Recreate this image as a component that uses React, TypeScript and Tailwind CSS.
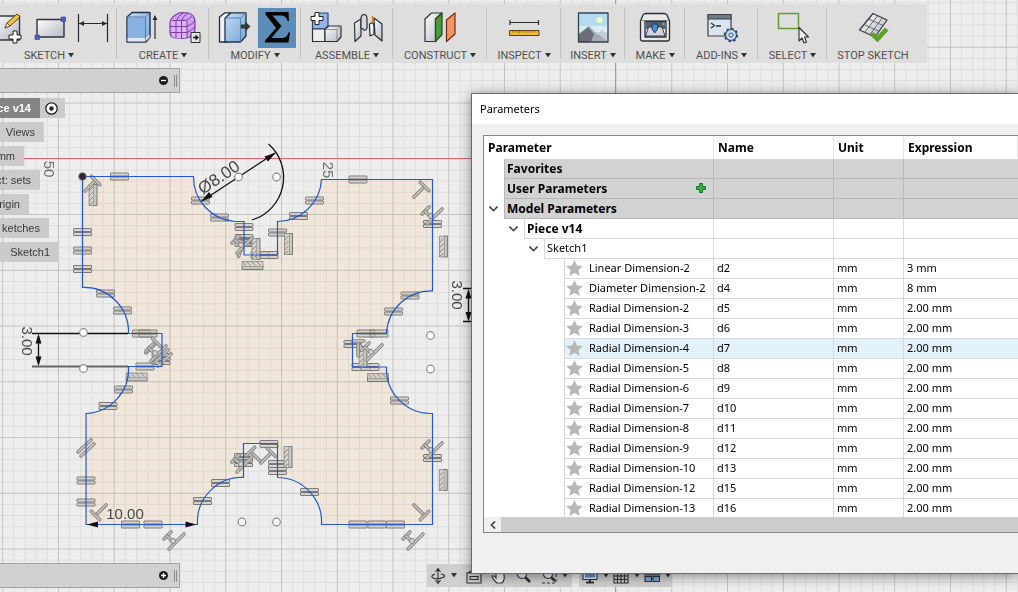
import type { ReactNode } from "react";
import { clsx } from "clsx";

type Point = [number, number];

function Icon({ children }: { children: ReactNode }) {
  return (
    <svg viewBox="0 0 32 32" className="w-8 h-8 overflow-visible" fill="none" strokeLinejoin="round">
      {children}
    </svg>
  );
}

function Caret() {
  return (
    <svg viewBox="0 0 6 5" className="w-[6px] h-[5px] flex-shrink-0">
      <path d="M0 0h6L3 4.500z" fill="#333" />
    </svg>
  );
}

const Defs = () => (
  <defs>
    <linearGradient id="steel" x1="0" y1="0" x2="1" y2="1">
      <stop offset="0" stopColor="#fdfdfd" />
      <stop offset="1" stopColor="#b4b9c4" />
    </linearGradient>
    <linearGradient id="sky" x1="0" y1="0" x2="1" y2="1">
      <stop offset="0" stopColor="#c5dcf3" />
      <stop offset="1" stopColor="#76a6d8" />
    </linearGradient>
    <pattern id="minor" width="11.15" height="11.15" x="2.250" y="2.200" patternUnits="userSpaceOnUse">
      <path d="M.5 0V11.150M0 .5H11.150" stroke="#a9a9a9" strokeOpacity=".24" strokeWidth="1" />
    </pattern>
    <pattern id="major" width="55.75" height="55.75" x="2.250" y="46.800" patternUnits="userSpaceOnUse">
      <path d="M.5 0V55.750M0 .5H55.750" stroke="#8c8c8c" strokeOpacity=".3" strokeWidth="1" />
    </pattern>
  </defs>
);

/* Toolbar icons */

const CreateSketchIcon = () => (
  <Icon>
    <path d="M2 4H29.500V28H2z" fill="url(#steel)" stroke="#33373f" strokeWidth="1.400" />
    <path d="M15 16l2-5L27 2l3 3-10 9z" fill="#f5c33b" stroke="#5a4314" />
    <path d="M15 16l2-5 3 3z" fill="#f7e3bd" stroke="#5a4314" strokeWidth=".7" />
    <path d="M23 19h4v4h4v4h-4v4h-4v-4h-4v-4h4z" fill="#fff" stroke="#222" />
  </Icon>
);

const RectangleIcon = () => (
  <Icon>
    <path d="M4 7.500H31V25H4z" fill="url(#steel)" stroke="#2f3338" strokeWidth="1.400" />
    <path d="M28 5h4.500v4.500H28zM2 23h4.500v4.500H2z" fill="#4661c4" stroke="#2f479f" strokeWidth=".6" />
  </Icon>
);

const DimensionIcon = () => (
  <Icon>
    <path d="M2.500 2V30M31.500 2V30M3 11.500H31" stroke="#25282c" strokeWidth="1.200" />
    <path d="M3 11.500l5-2.500v5zM31 11.500l-5-2.500v5z" fill="#25282c" />
  </Icon>
);

const ExtrudeIcon = () => (
  <Icon>
    <path d="M1 5L6 .500H24V25l-4 5H1z" fill="url(#sky)" stroke="#20304a" strokeWidth="1.400" />
    <path d="M1.700 5.500H19.500V25.500H1.700z" fill="#8ab2e0" />
    <path d="M1.500 26H20l3.500-3.500v3L19.500 29.500H1.500z" fill="#e4e8ee" />
    <path d="M1 5H19.500L24 .700M19.500 5V29" stroke="#4c6c98" strokeWidth=".8" />
    <path d="M29 5V27" stroke="#26292d" strokeWidth="1.200" />
    <path d="M29 3l-2.500 5h5z" fill="#26292d" />
  </Icon>
);

const FormIcon = () => (
  <Icon>
    <path d="M1 11Q1 6 8 2 11 0 19 1 25 2 26 9V17Q26 22 21 25 17 27 8 26 1 26 1 20z" fill="#cfa0f2" stroke="#7f3ba6" strokeWidth="1.200" />
    <path d="M2 9Q5 8 16 8.500L18 10V25.500Q10 27 3 25z" fill="#dbb4f7" />
    <path d="M1 14.500H18Q23 12 26 9M1 20.500H18Q23 18 26 15M3 8.500H17Q22 6 23 3.500M7 26V9Q9 4 14 1M12.500 26V9Q14 4 19 1M18 26V9" stroke="#7f3ba6" />
    <path d="M22 20.500H31V30.500H22z" fill="#e6e6e6" stroke="#2c2c2c" />
    <path d="M24 25.500h3" stroke="#111" strokeWidth="1.500" />
    <path d="M26.500 22.500l3.500 3-3.500 3z" fill="#111" />
  </Icon>
);

const PressPullIcon = () => (
  <Icon>
    <path d="M1.500 5L7 .800H13L9 5V30H1.500z" fill="#f0f3f7" stroke="#20304a" strokeWidth="1.300" />
    <path d="M7 6L13 .800H28V24l-5.500 6H7z" fill="url(#sky)" stroke="#20304a" strokeWidth="1.300" />
    <path d="M7 6H22.500L28 .800M22.500 6V30" stroke="#557bab" strokeWidth=".9" />
    <path d="M23 12.500h4V9.500l5.500 5-5.500 5v-3h-4z" fill="#33372f" />
  </Icon>
);

const SigmaIcon = () => (
  <Icon>
    <path
      d="M4.500 0H27.500L28 9H26.500Q25.500 3.500 20 3.500H11.500L20.500 14 10.500 26H21Q26 26 27.500 20.500H29L27.500 30.500H4V28.500L15 16 4.500 2.500z"
      fill="#050505"
    />
  </Icon>
);

const NewComponentIcon = () => (
  <Icon>
    <path d="M2.500 6L7 1H18V14L15 17H2.500z" fill="#91b5e6" stroke="#2d4777" strokeWidth="1.200" />
    <path d="M2.500 17H15V29.500H2.500z" fill="#eceef1" stroke="#2c3036" strokeWidth="1.200" />
    <path d="M15 17l4-3H31V25l-4 4.500H15z" fill="url(#steel)" stroke="#2c3036" strokeWidth="1.200" />
    <path d="M15 17.500H27L31 14M27 17.500V29" stroke="#777d86" strokeWidth=".8" />
    <path d="M5 .500H9V4.500H13V8.500H9V12.500H5V8.500H1V4.500H5z" fill="#fff" stroke="#222" />
  </Icon>
);

const JointIcon = () => (
  <Icon>
    <path d="M1.500 11L8 7V24l-6 5.500z" fill="url(#steel)" stroke="#2c3036" strokeWidth="1.200" />
    <path d="M8 7Q8 2.500 11.500 2.500 14 3 14 7V16Q12 20 10 17L8 16z" fill="#d6dae0" stroke="#2c3036" strokeWidth="1.200" />
    <path d="M19.500 4V15" stroke="#f07d22" strokeWidth="1.500" />
    <path d="M21 6L29 12V29L22 23z" fill="url(#steel)" stroke="#2c3036" strokeWidth="1.200" />
    <path d="M16.500 14Q16 11 18.500 11 21 11 21 14V22L17 24z" fill="#eef0f3" stroke="#2c3036" strokeWidth="1.200" />
  </Icon>
);

const PlaneIcon = () => (
  <Icon>
    <path d="M1 7L7.500 1H18L11.500 7V29.500H1z" fill="url(#steel)" stroke="#2c3036" strokeWidth="1.200" />
    <path d="M11.500 7L18 1V22.500l-6.500 7z" fill="#4b9a3a" stroke="#1f4c17" strokeWidth="1.200" />
    <path d="M22.500 8L31 1V22l-8.500 7.500z" fill="#f39461" stroke="#6f2d12" strokeWidth="1.200" />
  </Icon>
);

const MeasureIcon = () => (
  <Icon>
    <path d="M2 8V13M30.500 8V13M2 10.500H30.500" stroke="#2b2e33" strokeWidth="1.200" />
    <path d="M1.500 18.500H31V23.500H1.500z" fill="#f2b92e" stroke="#61430d" />
    <path d="M5 19v1.500M8 19v1.500M11 19v2M14 19v1.500M17 19v1.500M20 19v2M23 19v1.500M26 19v1.500" stroke="#61430d" strokeWidth=".8" />
  </Icon>
);

const ImageIcon = () => (
  <Icon>
    <path d="M1.500 1H31V30H1.500z" fill="#b4dcef" />
    <path d="M1.500 14H31V20H1.500z" fill="#dcebf0" />
    <circle cx="22.500" cy="8" r="3" fill="#fff6bd" />
    <path d="M1.500 22L12 14 21 23 25 18 31 24V30H1.500z" fill="#a5aab3" />
    <path d="M1.500 23L11 15 17 22 14 30H1.500z" fill="#6a6f7a" />
    <path d="M21 22L25 18 31 24V30z" fill="#c7cbd2" />
    <path d="M1.500 1H31V30H1.500z" stroke="#354357" strokeWidth="1.300" />
  </Icon>
);

const PrinterIcon = () => (
  <Icon>
    <path d="M1.500 9L4 3Q5 1.500 7 1.500H25Q27 1.500 28 3L30.500 9V27Q30.500 29 28 29H4Q1.500 29 1.500 27z" fill="#e6e8ec" stroke="#2c3036" strokeWidth="1.300" />
    <path d="M2.500 8.500H29.500" stroke="#8b9099" />
    <path d="M6 9.500H27V25H6z" fill="#f4f5f7" stroke="#2c3036" strokeWidth="1.300" />
    <path d="M7 10H26V17H7z" fill="#5a6069" />
    <path d="M6.500 24L9.500 15H23L26 24z" fill="#d0d6df" stroke="#2c3036" strokeWidth=".9" />
    <path d="M13 12H18.500V17L15.700 21 13 17z" fill="#4d8cd6" stroke="#1d3d6b" />
    <circle cx="24.500" cy="12" r="1" fill="#7ad35f" />
  </Icon>
);

const ScriptIcon = () => (
  <Icon>
    <path d="M2 2.500H25V24H2z" fill="#dce4ee" stroke="#3c4047" strokeWidth="1.200" />
    <path d="M2 2.500H25V7H2z" fill="#737a86" stroke="#3c4047" />
    <path d="M5 11l3.500 2.500L5 16M10 14h5" stroke="#2c2f35" strokeWidth="1.300" />
    <circle cx="25" cy="23" r="5.500" fill="#c7daf2" stroke="#29466f" strokeWidth="1.200" />
    <circle cx="25" cy="23" r="6.500" stroke="#29466f" strokeWidth="1.500" strokeDasharray="2.500 2.500" />
    <circle cx="25" cy="23" r="2" fill="#f2f6fc" stroke="#29466f" />
  </Icon>
);

const SelectIcon = () => (
  <Icon>
    <path d="M1.500 1.500H21.500V16.500H1.500z" stroke="#659c2e" strokeWidth="1.500" />
    <path d="M22 15.500V29l3-3 2 5 2.500-1L27.500 25H31.500z" fill="#e9edf3" stroke="#2c3036" strokeWidth="1.100" />
  </Icon>
);

const StopSketchIcon = () => (
  <Icon>
    <path d="M16 1.500L30 8 18 25 2.500 18z" fill="url(#steel)" stroke="#383c44" strokeWidth="1.300" />
    <path d="M20.700 3.700L7.700 20.300M25.400 5.800L12.900 22.700M11.500 7L26 13.500M7 12.500L22 19.300" stroke="#555a63" strokeWidth=".9" />
    <path d="M13.500 23l3-2.500 3.500 4L28 16l3 2.500L20.500 30z" fill="#5da321" stroke="#4a8a16" strokeWidth=".6" />
  </Icon>
);

const groups = [
  { label: "SKETCH", width: "w-[136px] -ml-[19px]", icons: [CreateSketchIcon, RectangleIcon, DimensionIcon] },
  { label: "CREATE", width: "w-[92px]", icons: [ExtrudeIcon, FormIcon] },
  { label: "MODIFY", width: "w-[92px]", icons: [PressPullIcon, SigmaIcon] },
  { label: "ASSEMBLE", width: "w-[92px]", icons: [NewComponentIcon, JointIcon] },
  { label: "CONSTRUCT", width: "w-[94px]", icons: [PlaneIcon] },
  { label: "INSPECT", width: "w-[74px]", icons: [MeasureIcon] },
  { label: "INSERT", width: "w-[64px]", icons: [ImageIcon] },
  { label: "MAKE", width: "w-[60px]", icons: [PrinterIcon] },
  { label: "ADD-INS", width: "w-[73px]", icons: [ScriptIcon] },
  { label: "SELECT", width: "w-[69px]", icons: [SelectIcon] },
  { label: "STOP SKETCH", width: "w-[100px] pr-2", icons: [StopSketchIcon] },
];

function Toolbar() {
  return (
    <header className="absolute top-1 left-0 flex max-w-full overflow-hidden bg-[#dedede] text-[11px] leading-[15px] text-[#505050]">
      {groups.map((group, i) => (
        <div key={group.label} className={clsx("relative flex flex-col items-center flex-shrink-0 pt-1", group.width)}>
          <div className="flex gap-[5px]">
            {group.icons.map((GroupIcon, n) => (
              <button
                key={n}
                aria-label={`${group.label} ${n + 1}`}
                className={clsx("flex items-center justify-center w-[38px] h-10", GroupIcon === SigmaIcon && "bg-[#5b8db8]")}
              >
                <GroupIcon />
              </button>
            ))}
          </div>
          <button className="flex items-center gap-[3px] whitespace-nowrap">
            {group.label}
            {i < groups.length - 1 && <Caret />}
          </button>
          {i < groups.length - 1 && <span className="absolute right-0 top-1 bottom-1 w-px bg-[#c2c2c2]" />}
        </div>
      ))}
    </header>
  );
}

/* Browser tree */

function PanelBar({ open, className }: { open: boolean; className: string }) {
  return (
    <div className={clsx("absolute left-0 flex items-center justify-end gap-[6px] w-[180px] h-[25px] pr-[2px] bg-[#d1d1d1] border border-l-0 border-[#a3a3a3]", className)}>
      <button aria-label={open ? "Collapse" : "Expand"}>
        <svg viewBox="0 0 9 9" className="w-[9px] h-[9px]">
          <circle cx="4.500" cy="4.500" r="4.500" fill="#1c1c1c" />
          <path d={open ? "M2 4.500H7" : "M2 4.500H7M4.500 2V7"} stroke="#fff" strokeWidth="1.300" />
        </svg>
      </button>
      <span className="w-[3px] h-3 border-r border-l border-[#8a8a8a]" />
    </div>
  );
}

const treeItems = [
  { label: "Views", width: "w-[44px]" },
  { label: "mm", width: "w-[24px]" },
  { label: "ct: sets", width: "w-[40px]" },
  { label: "rigin", width: "w-[29px]" },
  { label: "ketches", width: "w-[49px]" },
  { label: "Sketch1", width: "w-[59px]" },
];

function BrowserTree() {
  return (
    <nav className="absolute left-0 top-[98px] flex flex-col items-start gap-1 font-['Liberation_Sans',sans-serif] text-[11px] leading-5 text-[#3a3a3a]">
      <div className="flex w-[65px] h-5 bg-[#cbcbcb]">
        <button className="flex justify-end w-10 pr-[9px] bg-[#848484] font-bold text-white whitespace-nowrap">ce v14</button>
        <button aria-label="Activate component" className="flex items-center justify-center w-[22px]">
          <svg viewBox="0 0 13 13" className="w-[13px] h-[13px]">
            <circle cx="6.500" cy="6.500" r="5.700" fill="#fff" stroke="#222" strokeWidth="1.300" />
            <circle cx="6.500" cy="6.500" r="2.200" fill="#222" />
          </svg>
        </button>
      </div>
      {treeItems.map((item) => (
        <button key={item.label} className={clsx("flex justify-end h-5 pr-[9px] bg-[#cbcbcb] whitespace-nowrap", item.width)}>
          {item.label}
        </button>
      ))}
    </nav>
  );
}

/* Sketch canvas */

const profile =
  "M82.500 176.500H193.500A44.500 44.500 0 0 0 235 221.500H244V255H277.500V221.500A44.500 44.500 0 0 0 321.500 179.500H432.500V291A44.500 44.500 0 0 0 386.500 333.500H352.500V367H386.500A44.500 44.500 0 0 0 430 413.500H432.500V524.500H321.500A44.500 44.500 0 0 0 277.500 477.500V443.500H243.500V477.500A44.500 44.500 0 0 0 197.500 524.500H86V413.500A44.500 44.500 0 0 0 128.500 366.500H162V333.500H128.500A44.500 44.500 0 0 0 82.500 287.500z";

const equals: Point[] = [
  [119.5, 176.5], [358, 179.5], [82.5, 232], [82.5, 250.5], [82.5, 269],
  [200.5, 200.5], [219.5, 217.5], [244, 227], [244, 238], [244, 243], [260, 255], [269, 255],
  [314.5, 200.5], [298.5, 216], [277.5, 232.5],
  [432.5, 224], [410, 295.5], [393.5, 311.5], [366, 333.5], [379, 333.5], [353, 344], [361, 367], [370, 367],
  [105.5, 293.5], [122.5, 310.5], [141.5, 333.5], [148, 333.5], [145, 366.5], [123.5, 389.5], [108, 406], [161, 357], [161, 361],
  [86, 480.5], [86, 502.5], [130.5, 524.5], [153, 524.5], [202.5, 501], [220.5, 483],
  [243.5, 457], [243.5, 463], [269, 444], [277.5, 464], [277.5, 471], [309.5, 492],
  [399.5, 400.5], [432.5, 458], [358, 524.5], [377, 524.5], [395.5, 524.5],
];

// x, y, rotation
const hatched: [number, number, number][] = [
  [93, 195, 0], [256, 249, 0], [288.5, 244, 0], [252.5, 265.5, 90],
  [443.5, 246.5, 0], [363, 357, 0], [136.7, 377, 90], [288, 457, 0], [378, 377.5, 90], [443.3, 480, 0],
];

const perpendicular: [number, number, number][] = [
  [92, 184, 45], [421, 190, 45], [99, 512, 225], [421, 512, 135],
  [153, 346, 45], [242, 247, 20], [254, 455, 315], [268, 456, 45], [358, 346, 0],
];

const parallel: Point[] = [[86, 448], [163, 358]];

const tangents: Point[] = [[174, 540], [413, 540], [432, 215], [432, 449], [242, 463], [242, 244], [156, 352], [372, 351]];

const handles: Point[] = [
  [238.5, 177], [276.5, 177], [83.5, 332.5], [83.5, 368.5],
  [430.5, 335.5], [430.5, 369], [242, 522], [276.5, 522],
];

function Bar({ d }: { d: string }) {
  return (
    <>
      <path d={d} stroke="#777" strokeWidth="3.600" strokeLinecap="round" />
      <path d={d} stroke="#bdbab5" strokeWidth="1.800" strokeLinecap="round" />
    </>
  );
}

function Constraints() {
  return (
    <g fill="none" opacity=".9">
      {equals.map(([x, y], i) => (
        <g key={i} transform={`translate(${x} ${y})`} fill="#c4c1bd" fillOpacity=".6" stroke="#6e6e6e">
          <rect x="-9" y="-3.500" width="18" height="3" rx=".5" />
          <rect x="-9" y=".5" width="18" height="3" rx=".5" />
        </g>
      ))}
      {hatched.map(([x, y, r], i) => (
        <g key={i} transform={`translate(${x} ${y}) rotate(${r})`} stroke="#6e6e6e">
          <path d="M.5-10.500H4V10.500H.5z" fill="#c4c1bd" />
          <path d="M.5-10.500H-4V10.500H.5" fill="#d2cfca" strokeOpacity=".7" />
          <path d="M-4-4l4-4M-4 1l4-4M-4 6l4-4M-4 10l4-3" strokeWidth=".8" />
        </g>
      ))}
      {perpendicular.map(([x, y, r], i) => (
        <g key={i} transform={`translate(${x} ${y}) rotate(${r})`}>
          <Bar d="M0 10V-4" />
          <Bar d="M-6-5H6" />
        </g>
      ))}
      {parallel.map(([x, y], i) => (
        <g key={i} transform={`translate(${x} ${y})`}>
          <Bar d="M-8 4L5-8" />
          <Bar d="M-5 8L8-4" />
        </g>
      ))}
      {tangents.map(([x, y], i) => (
        <g key={i} transform={`translate(${x} ${y})`}>
          <Bar d="M-10-1L-3-8" />
          <Bar d="M-7-4L-2 1" />
          <Bar d="M-5 9L10-6" />
          <circle cx="-1" cy="1" r="2.500" fill="#d6d3ce" stroke="#777" />
        </g>
      ))}
    </g>
  );
}

function Dimensions() {
  return (
    <g>
      <g stroke="#111" strokeWidth="1.300" fill="none">
        <path d="M202 201L275 153" />
        <path d="M268.500 144A44.500 44.500 0 0 1 252 220" />
        <path d="M32 333.500H128M38.500 336V364M468.500 291V320M463 288.500H471M463 321.500H471" />
        <path d="M32 366.500H128" stroke="#666" strokeWidth="2" />
      </g>
      <path
        d="M276 152.500l-11.500 4 3.500 5zM201 201.500l8-9.500 3.500 5zM38.500 334l-3 9.500h6zM38.500 366l-3-9.500h6zM468.500 289l-3 9.500h6zM468.500 321.500l-3-9.500h6zM87 524.500l11-3v6zM196.500 524.500l-11-3v6z"
        fill="#111"
      />
      <g className="font-['Liberation_Sans',sans-serif]" fontSize="15" textAnchor="middle" fill="#484848">
        <text fontSize="17" transform="translate(222 182) rotate(-34)">Ø8.00</text>
        <text transform="translate(44 169) rotate(90)" fill="#707070">50</text>
        <text transform="translate(323 170) rotate(90)" fill="#707070">25</text>
        <text transform="translate(22 341) rotate(90)">3.00</text>
        <text transform="translate(452 295) rotate(90)">3.00</text>
        <text x="125" y="519">10.00</text>
      </g>
    </g>
  );
}

function Canvas() {
  return (
    <svg className="absolute inset-0 w-full h-full">
      <Defs />
      <rect width="100%" height="100%" fill="#ededed" />
      <path d={profile} fill="#f0e6da" />
      <rect width="100%" height="100%" fill="url(#minor)" />
      <rect width="100%" height="100%" fill="url(#major)" />
      <path d="M0 158.500H4000" stroke="#d96a6a" />
      <path d="M615.500 0V2000" stroke="#63c873" />
      <Constraints />
      <path d={profile} fill="none" stroke="#2358cf" strokeWidth="1.200" />
      <Dimensions />
      {handles.map(([x, y], i) => (
        <circle key={i} cx={x} cy={y} r="3.800" fill="#fff" stroke="#8a8a8a" strokeWidth="1.200" />
      ))}
      <circle cx="82.500" cy="176.500" r="3.800" fill="#2b2b2b" stroke="#777" strokeWidth=".8" />
    </svg>
  );
}

/* Navigation bar */

const navIcons = [
  { label: "Orbit", caret: true, art: <path d="M8 1V15M5.500 4L8 .500 10.500 4M5.500 12L8 15.500 10.500 12M5 6Q0 8 3 10 8 12 14 9 16 7 11 6" /> },
  { label: "Look at", caret: false, art: <path d="M1 5H15V15H1zM4 8.500H12V11.500H4zM2 5L8 1V5" /> },
  { label: "Pan", caret: false, art: <path d="M5 14Q1 10 1 8 3 7 5 10V3Q7 2 7 4V2Q9 1 9 3 11 2 11 5 13 4 13 7 14 12 11 15H6z" fill="#f5f5f5" /> },
  { label: "Zoom", caret: false, art: <><circle cx="6" cy="6" r="4.500" fill="#e8eef5" /><path d="M9 9L14 14" strokeWidth="2.500" /></> },
  { label: "Fit", caret: true, art: <><circle cx="7" cy="6" r="4.500" fill="#e8eef5" /><path d="M10 9L14 13" strokeWidth="2.500" /><path d="M1 15H15V1" strokeDasharray="3 2" /></> },
];

const displayIcons = [
  { label: "Display settings", art: <><path d="M1 2H15V11.500H1z" fill="#e8eef5" /><path d="M3 4H13V9.500H3z" fill="#5f92cf" stroke="none" /><path d="M4 14.500H12M8 12V14.500" strokeWidth="2" /></> },
  { label: "Grid and snaps", art: <path d="M1 1H15V15H1zM4.500 1V15M8 1V15M11.500 1V15M1 4.500H15M1 8H15M1 11.500H15" /> },
  { label: "Viewports", art: <path d="M1 2H7.500V7H1zM9 2H15.500V7H9zM1 8.500H7.500V13.500H1zM9 8.500H15.500V13.500H9z" fill="#7ea9dc" /> },
];

function NavButton({ label, art, caret }: { label: string; art: ReactNode; caret: boolean }) {
  return (
    <button aria-label={label} className="flex items-center gap-[5px]">
      <svg viewBox="0 0 16 16" className="w-4 h-4" fill="none" stroke="#2f3338" strokeWidth="1.100">
        {art}
      </svg>
      {caret && <Caret />}
    </button>
  );
}

function NavigationBar() {
  return (
    <div className="absolute left-[427px] top-[564px] flex gap-[7px]">
      <div className="flex items-center gap-[9px] w-[145px] h-[23px] pl-[3px] bg-[#cfcfcf]">
        {navIcons.map((item) => <NavButton key={item.label} {...item} />)}
      </div>
      <div className="flex items-center gap-1 w-[93px] h-[23px] pl-[3px] bg-[#cfcfcf]">
        {displayIcons.map((item) => <NavButton key={item.label} {...item} caret />)}
      </div>
    </div>
  );
}

/* Parameters dialog */

const sections = [
  { title: "Favorites", kind: "section" },
  { title: "User Parameters", kind: "section", addable: true },
  { title: "Model Parameters", kind: "section", open: true },
  { title: "Piece v14", kind: "component", open: true },
  { title: "Sketch1", kind: "sketch", open: true },
];

const parameters = [
  ["Linear Dimension-2", "d2", "3 mm"],
  ["Diameter Dimension-2", "d4", "8 mm"],
  ["Radial Dimension-2", "d5", "2.00 mm"],
  ["Radial Dimension-3", "d6", "2.00 mm"],
  ["Radial Dimension-4", "d7", "2.00 mm"],
  ["Radial Dimension-5", "d8", "2.00 mm"],
  ["Radial Dimension-6", "d9", "2.00 mm"],
  ["Radial Dimension-7", "d10", "2.00 mm"],
  ["Radial Dimension-8", "d11", "2.00 mm"],
  ["Radial Dimension-9", "d12", "2.00 mm"],
  ["Radial Dimension-10", "d13", "2.00 mm"],
  ["Radial Dimension-12", "d15", "2.00 mm"],
  ["Radial Dimension-13", "d16", "2.00 mm"],
];

function Chevron() {
  return (
    <button aria-label="Collapse" className="flex items-center justify-center w-5 h-full pr-[2px]">
      <svg viewBox="0 0 9 6" className="w-[9px] h-[6px]" fill="none" stroke="#444" strokeWidth="1.600">
        <path d="M.5 .500L4.500 4.700 8.500 .500" />
      </svg>
    </button>
  );
}

function Star() {
  return (
    <svg viewBox="0 0 17 18" className="w-[17px] h-[18px] flex-shrink-0" fill="#b8b8b8">
      <path d="M8.500 0L11 5.500 17 6 12.500 10 13.800 16 8.500 13 3.200 16 4.500 10 0 6 6 5.500z" />
    </svg>
  );
}

function ParametersTable() {
  return (
    <table className="w-full table-fixed border-separate border-spacing-0 text-black">
      <colgroup>
        <col className="w-[230px]" />
        <col className="w-[120px]" />
        <col className="w-[70px]" />
        <col />
      </colgroup>
      <thead>
        <tr className="h-[23px] text-left text-[12px] leading-[22px] font-bold">
          {["Parameter", "Name", "Unit", "Expression"].map((title) => (
            <th key={title} className="p-0 pl-1 border-r border-[#e2e2e2]">{title}</th>
          ))}
        </tr>
      </thead>
      <tbody>
        {sections.map((row) => {
          const grey = row.kind === "section";
          const line = grey ? "border-[#b8b8b8] bg-[#d2d2d2]" : "border-[#d9d9d9]";
          return (
            <tr key={row.title} className={clsx("h-5", row.kind === "sketch" ? "text-[11px]" : "text-[12px] font-bold")}>
              <td className="p-0">
                <div className={clsx("flex h-5", row.kind === "component" && "pl-5", row.kind === "sketch" && "pl-10")}>
                  {row.open ? <Chevron /> : <span className="w-5" />}
                  <div className={clsx("flex flex-1 items-center justify-between pl-[2px] pr-[7px] border-l border-b border-r", line)}>
                    {row.title}
                    {row.addable && (
                      <button aria-label="Add user parameter" className="pb-[2px]">
                        <svg viewBox="0 0 10 10" className="w-[10px] h-[10px]">
                          <path d="M3.500 .500H6.500V3.500H9.500V6.500H6.500V9.500H3.500V6.500H.5V3.500H3.500z" fill="#35b04a" stroke="#167528" />
                        </svg>
                      </button>
                    )}
                  </div>
                </div>
              </td>
              <td className={clsx("p-0 border-b border-r", line)} />
              <td className={clsx("p-0 border-b border-r", line)} />
              <td className={clsx("p-0 border-b", line)} />
            </tr>
          );
        })}
        {parameters.map(([title, name, expression]) => {
          const cell = clsx("border-[#d9d9d9]", name === "d7" && "bg-[#e3f1fb]");
          return (
            <tr key={name} className="h-5 text-[11px]">
              <td className="p-0 pl-20">
                <div className={clsx("flex items-center gap-[6px] h-5 pl-px border-l border-b border-r whitespace-nowrap", cell)}>
                  <Star />
                  {title}
                </div>
              </td>
              <td className={clsx("p-0 pl-[3px] border-b border-r", cell)}>{name}</td>
              <td className={clsx("p-0 pl-[3px] border-b border-r", cell)}>mm</td>
              <td className={clsx("p-0 pl-[3px] border-b", cell)}>{expression}</td>
            </tr>
          );
        })}
      </tbody>
    </table>
  );
}

function ParametersDialog() {
  return (
    <section
      aria-label="Parameters"
      className="absolute left-[471px] right-0 top-[93px] pb-10 bg-[#f0f0f0] border border-r-0 border-[#6b6b6b] shadow-[0_2px_12px_rgba(0,0,0,0.45)] font-['Noto_Sans',sans-serif]"
    >
      <h1 className="h-[30px] pl-2 bg-white text-[11px] leading-[30px] text-black">Parameters</h1>
      <div className="mt-[11px] ml-[11px] bg-white border border-r-0 border-[#82858c]">
        <div className="h-[381px] overflow-hidden">
          <ParametersTable />
        </div>
        <div className="flex h-[15px] bg-[#cdcdcd]">
          <button aria-label="Scroll left" className="flex items-center justify-center w-[17px] bg-[#f0f0f0]">
            <svg viewBox="0 0 6 8" className="w-[6px] h-2" fill="none" stroke="#444" strokeWidth="1.700">
              <path d="M5 .500L1.500 4 5 7.500" />
            </svg>
          </button>
        </div>
      </div>
    </section>
  );
}

export default function App() {
  return (
    <main className="relative min-h-screen overflow-hidden bg-[#ededed] font-[Roboto,sans-serif]">
      <Canvas />
      <Toolbar />
      <PanelBar open className="top-[68px]" />
      <BrowserTree />
      <PanelBar open={false} className="top-[563px]" />
      <NavigationBar />
      <ParametersDialog />
    </main>
  );
}
